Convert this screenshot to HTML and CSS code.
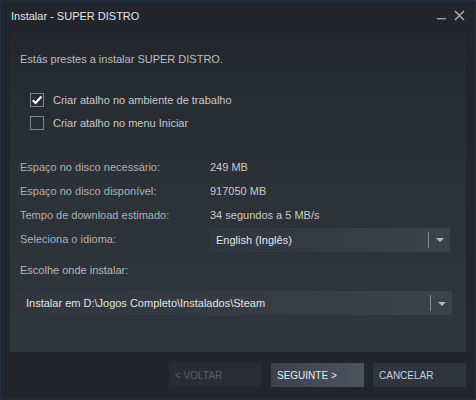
FILE: index.html
```html
<!DOCTYPE html>
<html>
<head>
<meta charset="utf-8">
<link rel="stylesheet" href="styles.css">
</head>
<body>
<div class="window">
  <div class="titlebar">
    <span class="title">Instalar - SUPER DISTRO</span>
    <div class="controls">
      <svg class="min" width="10" height="10" viewBox="0 0 10 10"><rect x="0" y="8" width="9" height="1.4" fill="#9ea2a7"/></svg>
      <svg class="close" width="11" height="11" viewBox="0 0 11 11"><path d="M1 1 L10 10 M10 1 L1 10" stroke="#a9adb2" stroke-width="1.5"/></svg>
    </div>
  </div>
  <div class="panel">
    <div class="intro">Estás prestes a instalar SUPER DISTRO.</div>
    <div class="checks">
      <div class="check-row">
        <span class="box">
          <svg width="12" height="12" viewBox="0 0 12 12"><path d="M1.8 6.2 L4.6 9 L10.4 2.6" fill="none" stroke="#ffffff" stroke-width="2.2"/></svg>
        </span>
        <span class="check-label">Criar atalho no ambiente de trabalho</span>
      </div>
      <div class="check-row">
        <span class="box"></span>
        <span class="check-label">Criar atalho no menu Iniciar</span>
      </div>
    </div>
    <div class="info">
      <div class="info-row"><span class="label">Espaço no disco necessário:</span><span class="value">249 MB</span></div>
      <div class="info-row"><span class="label">Espaço no disco disponível:</span><span class="value">917050 MB</span></div>
      <div class="info-row"><span class="label">Tempo de download estimado:</span><span class="value">34 segundos a 5 MB/s</span></div>
      <div class="info-row"><span class="label">Seleciona o idioma:</span>
        <div class="dropdown lang"><span class="dd-text">English (Inglês)</span><span class="dd-sep"></span><span class="dd-arrow"></span></div>
      </div>
    </div>
    <div class="where">Escolhe onde instalar:</div>
    <div class="dropdown path"><span class="dd-text">Instalar em D:\Jogos Completo\Instalados\Steam</span><span class="dd-sep"></span><span class="dd-arrow"></span></div>
  </div>
  <div class="footer">
    <button class="btn disabled">&lt; VOLTAR</button>
    <button class="btn primary">SEGUINTE &gt;</button>
    <button class="btn secondary">CANCELAR</button>
  </div>
</div>
</body>
</html>
```
FILE: styles.css
```css
html, body {
  margin: 0;
  padding: 0;
  background: #22252b;
}
body {
  font-family: "Liberation Sans", Arial, sans-serif;
  font-size: 11px;
}
.window {
  box-sizing: border-box;
  width: 476px;
  height: 400px;
  border: 1px solid #1d2f46;
  background: #22252b;
  display: flex;
  flex-direction: column;
}
.titlebar {
  height: 31px;
  display: flex;
  align-items: center;
  justify-content: space-between;
  padding: 0 10px 2px 10px;
  box-sizing: border-box;
}
.title {
  color: #e4e6e8;
  font-size: 11px;
}
.controls {
  display: flex;
  align-items: center;
  gap: 7px;
  padding-bottom: 1px;
}
.controls svg { display: block; }
.panel {
  margin: 0 9px;
  height: 320px;
  box-sizing: border-box;
  padding: 20px 10px 0 10px;
  background: linear-gradient(to bottom, #23262d 0%, #2c3037 45%, #31353d 100%);
  display: flex;
  flex-direction: column;
  color: #b7b9bc;
}
.intro {
  line-height: 14px;
  color: #bcbec1;
}
.checks {
  margin-top: 27px;
  padding-left: 10px;
  display: flex;
  flex-direction: column;
  gap: 9px;
}
.check-row {
  display: flex;
  align-items: center;
  height: 14px;
}
.box {
  box-sizing: border-box;
  width: 14px;
  height: 14px;
  border: 1px solid #7f8388;
  display: flex;
  align-items: center;
  justify-content: center;
  margin-right: 9px;
}
.box svg { display: block; }
.check-label {
  color: #c7c9cb;
  line-height: 14px;
}
.info {
  margin-top: 25px;
  display: flex;
  flex-direction: column;
}
.info-row {
  height: 24px;
  display: flex;
  align-items: center;
}
.label {
  width: 190px;
  color: #aeb1b5;
}
.value {
  color: #c8cacc;
}
.dropdown {
  box-sizing: border-box;
  height: 24px;
  display: flex;
  align-items: center;
  background: linear-gradient(to right, #30353e 0%, #383d47 70%, #3c414b 100%);
  color: #e2e4e6;
}
.lang {
  width: 240px;
  padding-left: 6px;
  margin-top: 1px;
}
.path {
  width: 432px;
  padding-left: 6px;
  margin-top: 14px;
}
.dd-text { flex: 1; }
.dd-sep {
  width: 1px;
  height: 16px;
  background: #8c9096;
  margin-right: 7px;
}
.dd-arrow {
  width: 0;
  height: 0;
  border-left: 4px solid transparent;
  border-right: 4px solid transparent;
  border-top: 4px solid #b4b8bd;
  margin-right: 6px;
  margin-top: 1px;
}
.where {
  margin-top: 12px;
  line-height: 14px;
  color: #b7b9bc;
}
.footer {
  display: flex;
  justify-content: flex-end;
  gap: 9px;
  padding: 11px 9px 0 0;
}
.btn {
  width: 93px;
  height: 24px;
  border: 0;
  font-family: "Liberation Sans", Arial, sans-serif;
  font-size: 10px;
  text-align: left;
  padding: 0 6px;
}
.disabled {
  background: #292d33;
  color: #5b6068;
}
.primary {
  background: linear-gradient(to right, #3b414d 0%, #464c58 60%, #4d535f 100%);
  color: #e6e9ec;
}
.secondary {
  background: #30353d;
  color: #c6d2df;
}
```
